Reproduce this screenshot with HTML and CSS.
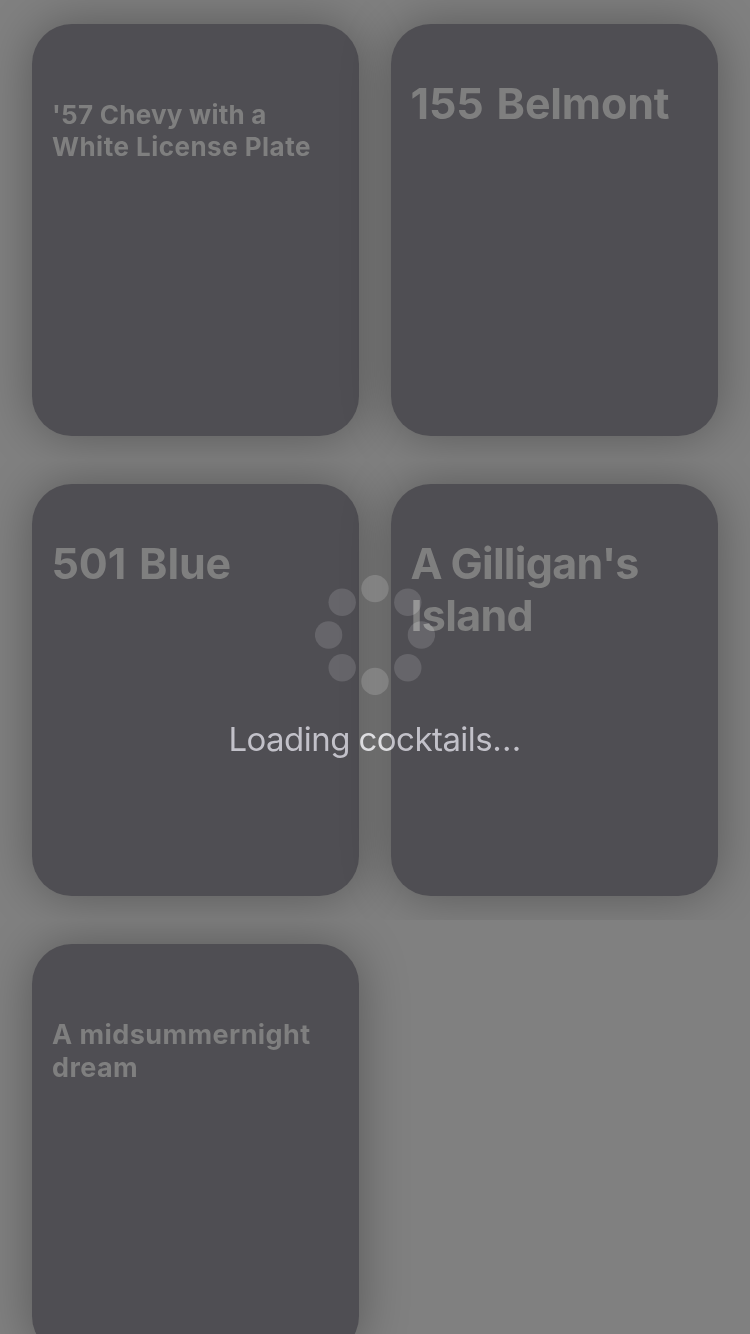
FILE: index.html
```html
<!DOCTYPE html>
<html lang="en">
<head>
<meta charset="utf-8">
<title>Cocktails</title>
<link rel="stylesheet" href="styles.css">
</head>
<body>
<main class="screen">
  <div class="row">
    <article class="card"><h2 class="title title-small chevy"><span class="l1">'57 Chevy with a</span><br><span class="l2">White License Plate</span></h2></article>
    <article class="card"><h2 class="title belmont">155 Belmont</h2></article>
  </div>
  <div class="row">
    <article class="card"><h2 class="title blue">501 Blue</h2></article>
    <article class="card"><h2 class="title gilligan"><span class="l1">A Gilligan's</span><br><span class="l2">Island</span></h2></article>
  </div>
  <div class="row">
    <article class="card"><h2 class="title title-small dream"><span class="l1">A midsummernight</span><br><span class="l2">dream</span></h2></article>
  </div>
  <div class="hud">
    <svg class="spinner" width="120" height="120" viewBox="-60 -60 120 120">
      <circle cx="0" cy="-46.4" r="13.7"/>
      <circle cx="32.8" cy="-32.8" r="13.7"/>
      <circle cx="46.4" cy="0" r="13.7"/>
      <circle cx="32.8" cy="32.8" r="13.7"/>
      <circle cx="0" cy="46.4" r="13.7"/>
      <circle cx="-32.8" cy="32.8" r="13.7"/>
      <circle cx="-46.4" cy="0" r="13.7"/>
      <circle cx="-32.8" cy="-32.8" r="13.7"/>
    </svg>
    <p class="status">Loading cocktails<span class="dots">...</span></p>
  </div>
</main>
</body>
</html>
```
FILE: styles.css
```css
body {
  margin: 0;
  background: #808080;
  font-family: Inter, "Liberation Sans", sans-serif;
}
.screen {
  position: relative;
  width: 750px;
  height: 1334px;
  overflow: hidden;
  background: #808080;
}
/* Rows clip their cards' shadows at the cell edge. */
.row {
  box-sizing: border-box;
  display: grid;
  grid-template-columns: 327px 327px;
  gap: 32px;
  height: 460px;
  padding: 24px 32px;
  overflow: hidden;
}
.card {
  box-sizing: border-box;
  height: 412px;
  padding: 53px 20px 0;
  border-radius: 40px;
  background: #4f4e53;
  box-shadow: 0 0 50px rgba(0, 0, 0, 0.32);
}
.title {
  margin: 0;
  color: #7f7f7f;
  font-size: 43px;
  font-weight: 700;
  line-height: 52px;
  white-space: nowrap;
}
.belmont,
.blue {
  margin-left: -0.5px;
  letter-spacing: -0.15px;
  word-spacing: 3px;
}
.gilligan {
  margin-left: -0.5px;
  letter-spacing: -0.7px;
  word-spacing: -1px;
}
.title-small {
  padding-top: 22px;
  font-size: 26px;
  line-height: 32px;
}
.chevy .l1 {
  letter-spacing: 0.25px;
}
.chevy .l2 {
  letter-spacing: 0.48px;
}
.dream {
  padding-top: 21px;
  font-size: 27px;
  line-height: 33px;
  letter-spacing: 0.42px;
}
.hud {
  position: absolute;
  inset: 575px 0 auto;
  display: flex;
  flex-direction: column;
  align-items: center;
  mix-blend-mode: plus-lighter;
}
.spinner {
  fill: #171717;
}
.status {
  margin: 23px 0 0;
  color: #737376;
  font-size: 33px;
  line-height: 42px;
  letter-spacing: -0.55px;
  white-space: nowrap;
}
.dots {
  letter-spacing: 0.3px;
}
```
